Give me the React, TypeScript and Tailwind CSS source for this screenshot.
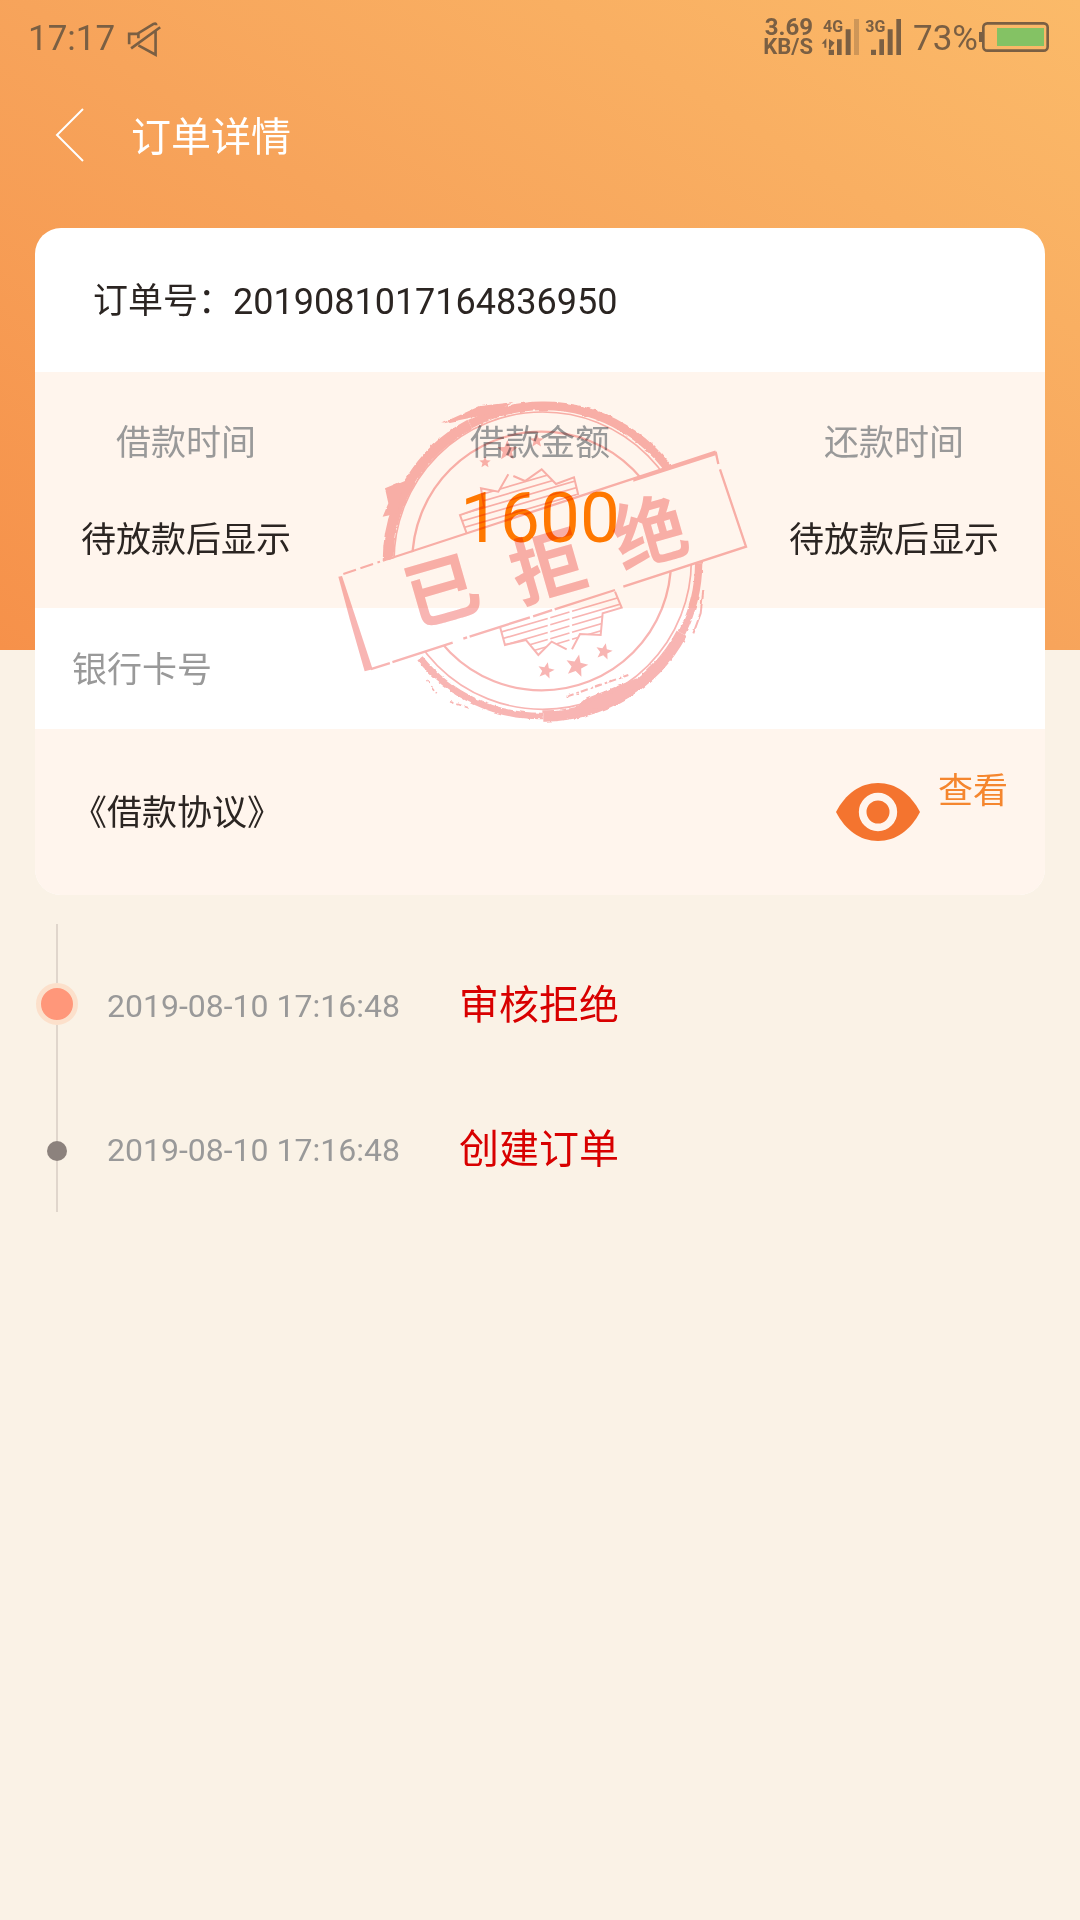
import type { ReactNode } from "react";

const orderNo = "2019081017164836950";

const records = [
  { time: "2019-08-10 17:16:48", title: "审核拒绝", current: true },
  { time: "2019-08-10 17:16:48", title: "创建订单", current: false },
];

const MuteIcon = () => (
  <svg viewBox="384 58 108 112" className="h-[37px] w-[36px] fill-none stroke-current stroke-[8]">
    <path d="M390 128V97H418M418 110V95L464 67Q472 63 472 71M484 77L396 141M470 88V160L418 132" />
  </svg>
);

const Signal4G = () => (
  <svg viewBox="240 54 120 114" className="h-[38px] w-[40px] fill-current">
    <text x="246" y="97" fontSize="48" fontWeight="700">4G</text>
    <path d="M242 131L256 115V143H250V131ZM264 117L281 128L270 142V148H264Z" />
    <path d="M263 149h16v16h-16zM288 118h14v47h-14zM314 88h15v77h-15z" />
    <path d="M339 57h15v108h-15z" opacity="0.35" />
  </svg>
);

const Signal3G = () => (
  <svg viewBox="372 54 114 114" className="h-[38px] w-[38px] fill-current">
    <text x="373" y="97" fontSize="48" fontWeight="700">3G</text>
    <path d="M390 149h15v16h-15zM415 118h14v47h-14zM440 88h15v77h-15zM466 57h14v108h-14z" />
  </svg>
);

const BatteryIcon = () => (
  <svg viewBox="714 60 216 102" className="h-[34px] w-[72px]">
    <path d="M717 96h9v30h-9z" className="fill-current" />
    <rect x="730" y="70" width="193" height="82" rx="12" className="fill-none stroke-current stroke-[8]" />
    <path d="M771 84h141v54H771z" fill="#84c264" />
  </svg>
);

const EyeIcon = () => (
  <svg viewBox="0 0 252 252" className="size-[84px]">
    <path d="M0 126C28 72 72 39 126 39S224 72 252 126C224 180 180 213 126 213S28 180 0 126Z" fill="#f4742f" />
    <circle cx="126" cy="126" r="46" fill="none" stroke="#fff5ed" strokeWidth="23" />
  </svg>
);

const star = "M0-10L2.6-3.4 9.5-3.1 4.2 1.3 5.9 8.1 0 4.3-5.9 8.1-4.2 1.3-9.5-3.1-2.6-3.4Z";

const Stamp = () => (
  <svg viewBox="0 0 1320 1080" className="h-[360px] w-[440px] fill-none stroke-[#f8b5b3]">
    <defs>
      <mask id="outside" maskUnits="userSpaceOnUse" x="0" y="0" width="1320" height="1080">
        <path d="M0 0H1320V1080H0Z" fill="white" stroke="none" />
        <path d="M55 590L1187 215L1280 500L145 870Z" fill="black" stroke="none" />
      </mask>
      <clipPath id="badge">
        <path d="M483 325L535 335L565 283L615 303L665 268L708 312L762 292L775 345L440 460L420 405L492 380Z" />
        <path d="M540 740L555 795L618 780L655 825L695 785L750 808L780 762L842 765L848 700L905 683L885 635Z" />
      </clipPath>
      <filter id="rough" x="-5%" y="-5%" width="110%" height="110%">
        <feTurbulence type="fractalNoise" baseFrequency="0.05" numOctaves="3" seed="4" />
        <feDisplacementMap in="SourceGraphic" scale="9" xChannelSelector="R" yChannelSelector="G" />
      </filter>
    </defs>

    <g mask="url(#outside)">
      <g filter="url(#rough)">
        <path d="M450 133A466 466 0 0 1 1136 550" strokeWidth="26" />
        <path d="M1136 550A466 466 0 0 1 1085 760" strokeWidth="22" />
        <path d="M1085 760A466 466 0 0 1 670 1008" strokeWidth="34" />
        <path d="M670 1008A466 466 0 0 1 300 835" strokeWidth="20" />
        <path d="M204 542A466 466 0 0 1 450 133" strokeWidth="32" />
        <path d="M195 325L255 300L240 350L235 400L188 410L205 370Z" className="fill-[#f8b5b3] stroke-none" />
        <path d="M360 132L480 78L580 66L520 100Z" className="fill-[#f8b5b3] stroke-none" />
        <path d="M800 955L950 895L930 950L850 985L760 990Z" className="fill-[#f8b5b3] stroke-none" />
        <path d="M1150 630L1142 700L1120 760" strokeWidth="6" />
        <path d="M740 950L840 915L925 885" strokeWidth="6" strokeDasharray="22 9 8 6" />
        <path d="M320 900L350 940M390 965L450 985" strokeWidth="5" strokeDasharray="14 9" />
      </g>
      <circle cx="668" cy="542" r="446" strokeWidth="5" />
      <circle cx="665" cy="543" r="388" strokeWidth="7" />

      <g strokeWidth="6">
        <path d="M440 460L420 405L492 380L483 325L535 335L565 283M580 288L615 303L665 268L708 312L762 292L775 345" />
        <path d="M540 740L555 795L618 780L655 825L695 785L740 808M756 808L780 762L842 765L848 700L905 683L885 635" />
      </g>
      <g clipPath="url(#badge)" strokeWidth="5">
        <path d="M400 368L800 251M400 389L800 272M400 410L800 293M400 431L800 314M400 452L800 335M400 473L800 356" />
        <path
          d="M520 763L920 646M520 784L920 667M520 805L920 688M520 826L920 709M520 847L920 730"
          strokeDasharray="170 8 60 8"
        />
      </g>
    </g>

    <g className="fill-[#f8b5b3] stroke-none">
      <path d={star} transform="translate(495 247) scale(1.8)" />
      <path d={star} transform="translate(562 212) scale(3.2)" />
      <path d={star} transform="translate(650 182) scale(2.2)" />
      <path d={star} transform="translate(678 872) rotate(12) scale(2.6)" />
      <path d={star} transform="translate(770 858) rotate(12) scale(3.5)" />
      <path d={star} transform="translate(852 815) rotate(12) scale(2.6)" />
    </g>

    <path d="M205 537L1187 215" strokeWidth="7" />
    <path d="M940 294L1187 215V226L940 305Z" className="fill-[#f8b5b3] stroke-none" />
    <path d="M1187 215L1195 252M1200 268L1278 500L910 620" strokeWidth="7" />
    <path d="M885 630L430 776M398 788L145 870" strokeWidth="7" strokeDasharray="190 8 60 10" />
    <path d="M55 590L66 588L158 868L134 874L90 720Z" className="fill-[#f8b5b3] stroke-none" />
    <path d="M70 582L180 545" strokeWidth="6" strokeDasharray="40 14" />

    <g className="fill-[#f8b5b3] stroke-none font-bold" fontSize="222" textAnchor="middle">
      <text transform="translate(388 710) rotate(-16)">已</text>
      <text transform="translate(706 638) rotate(-16)">拒</text>
      <text transform="translate(1012 535) rotate(-16)">绝</text>
    </g>
  </svg>
);

const StatusBar = () => (
  <div className="flex h-[74px] items-center justify-between pr-[30px] pl-7 text-[35px] text-[#7a5f43]">
    <div className="flex items-center gap-3 pt-1">
      <span>17:17</span>
      <MuteIcon />
    </div>
    <div className="flex items-center">
      <div className="mr-2 text-right leading-5 font-bold">
        <p className="text-[24px]">3.69</p>
        <p className="text-[22px]">KB/S</p>
      </div>
      <Signal4G />
      <div className="mr-2.5 ml-1">
        <Signal3G />
      </div>
      <span className="pt-1">73%</span>
      <BatteryIcon />
    </div>
  </div>
);

const LoanColumn = ({ label, children }: { label: string; children: ReactNode }) => (
  <div className="flex w-[210px] flex-col items-center">
    <dt className="text-[#999]">{label}</dt>
    {children}
  </div>
);

export default function App() {
  return (
    <div className="min-h-screen bg-[#faf2e6] bg-[linear-gradient(212deg,#fbba69,#f7a45b_50%,#f6914a)] bg-[length:100%_650px] bg-no-repeat font-[Roboto,'Noto_Sans_CJK_SC',sans-serif] text-[35px] leading-10 text-[#2b2522]">
      <StatusBar />

      <header className="flex h-[126px] items-center gap-[46px] pb-1 pl-[54px] text-[40px] text-white">
        <button type="button" aria-label="返回">
          <svg viewBox="0 0 31 56" className="h-14 w-[31px] fill-none stroke-white stroke-2">
            <path d="M29 2L3 28L29 54" />
          </svg>
        </button>
        <h1 className="pt-1.5">订单详情</h1>
      </header>

      <main className="px-[35px] pt-7">
        <section className="relative overflow-hidden rounded-[26px] bg-white">
          <p className="flex h-36 items-center px-[58px] pt-1">
            订单号：<span className="text-[36px]">{orderNo}</span>
          </p>

          <dl className="flex h-[236px] justify-between bg-[#fff5ed] px-[46px] pt-[52px]">
            <LoanColumn label="借款时间">
              <dd className="mt-[57px]">待放款后显示</dd>
            </LoanColumn>
            <LoanColumn label="借款金额">
              <dd className="mt-[18px] text-[71px] leading-[72px] text-[#ff7800]">1600</dd>
            </LoanColumn>
            <LoanColumn label="还款时间">
              <dd className="mt-[57px]">待放款后显示</dd>
            </LoanColumn>
          </dl>

          <p className="flex h-[121px] items-center px-[37px] pt-1 text-[#999]">银行卡号</p>

          <div className="flex h-[166px] items-center justify-between bg-[#fff5ed] px-[37px]">
            <p className="pt-1">《借款协议》</p>
            <button type="button" className="flex items-start gap-[18px] text-[#f5862e]">
              <EyeIcon />
              <span className="leading-11">查看</span>
            </button>
          </div>

          <div className="pointer-events-none absolute top-[152px] left-1/2 -translate-x-1/2 mix-blend-multiply">
            <Stamp />
          </div>
        </section>

        <ol className="mt-[29px]">
          {records.map((record) => (
            <li key={record.title} className="flex h-36">
              <div className="flex w-11 flex-col items-center">
                <span className={record.current ? "h-[59px] w-0.5 bg-[#e0d6cc]" : "h-[73px] w-0.5 bg-[#e0d6cc]"} />
                {record.current ? (
                  <span className="size-[42px] rounded-full border-[5px] border-[#fce0cb] bg-[#ff977a]" />
                ) : (
                  <span className="size-5 rounded-full bg-[#8c827d]" />
                )}
                <span className="w-0.5 flex-1 bg-[#e0d6cc]" />
              </div>
              <div className="flex items-center pt-5 pl-7">
                <time className="w-[352px] text-[32px] text-[#999]">{record.time}</time>
                <span className="text-[40px] text-[#d80000]">{record.title}</span>
              </div>
            </li>
          ))}
        </ol>
      </main>
    </div>
  );
}
